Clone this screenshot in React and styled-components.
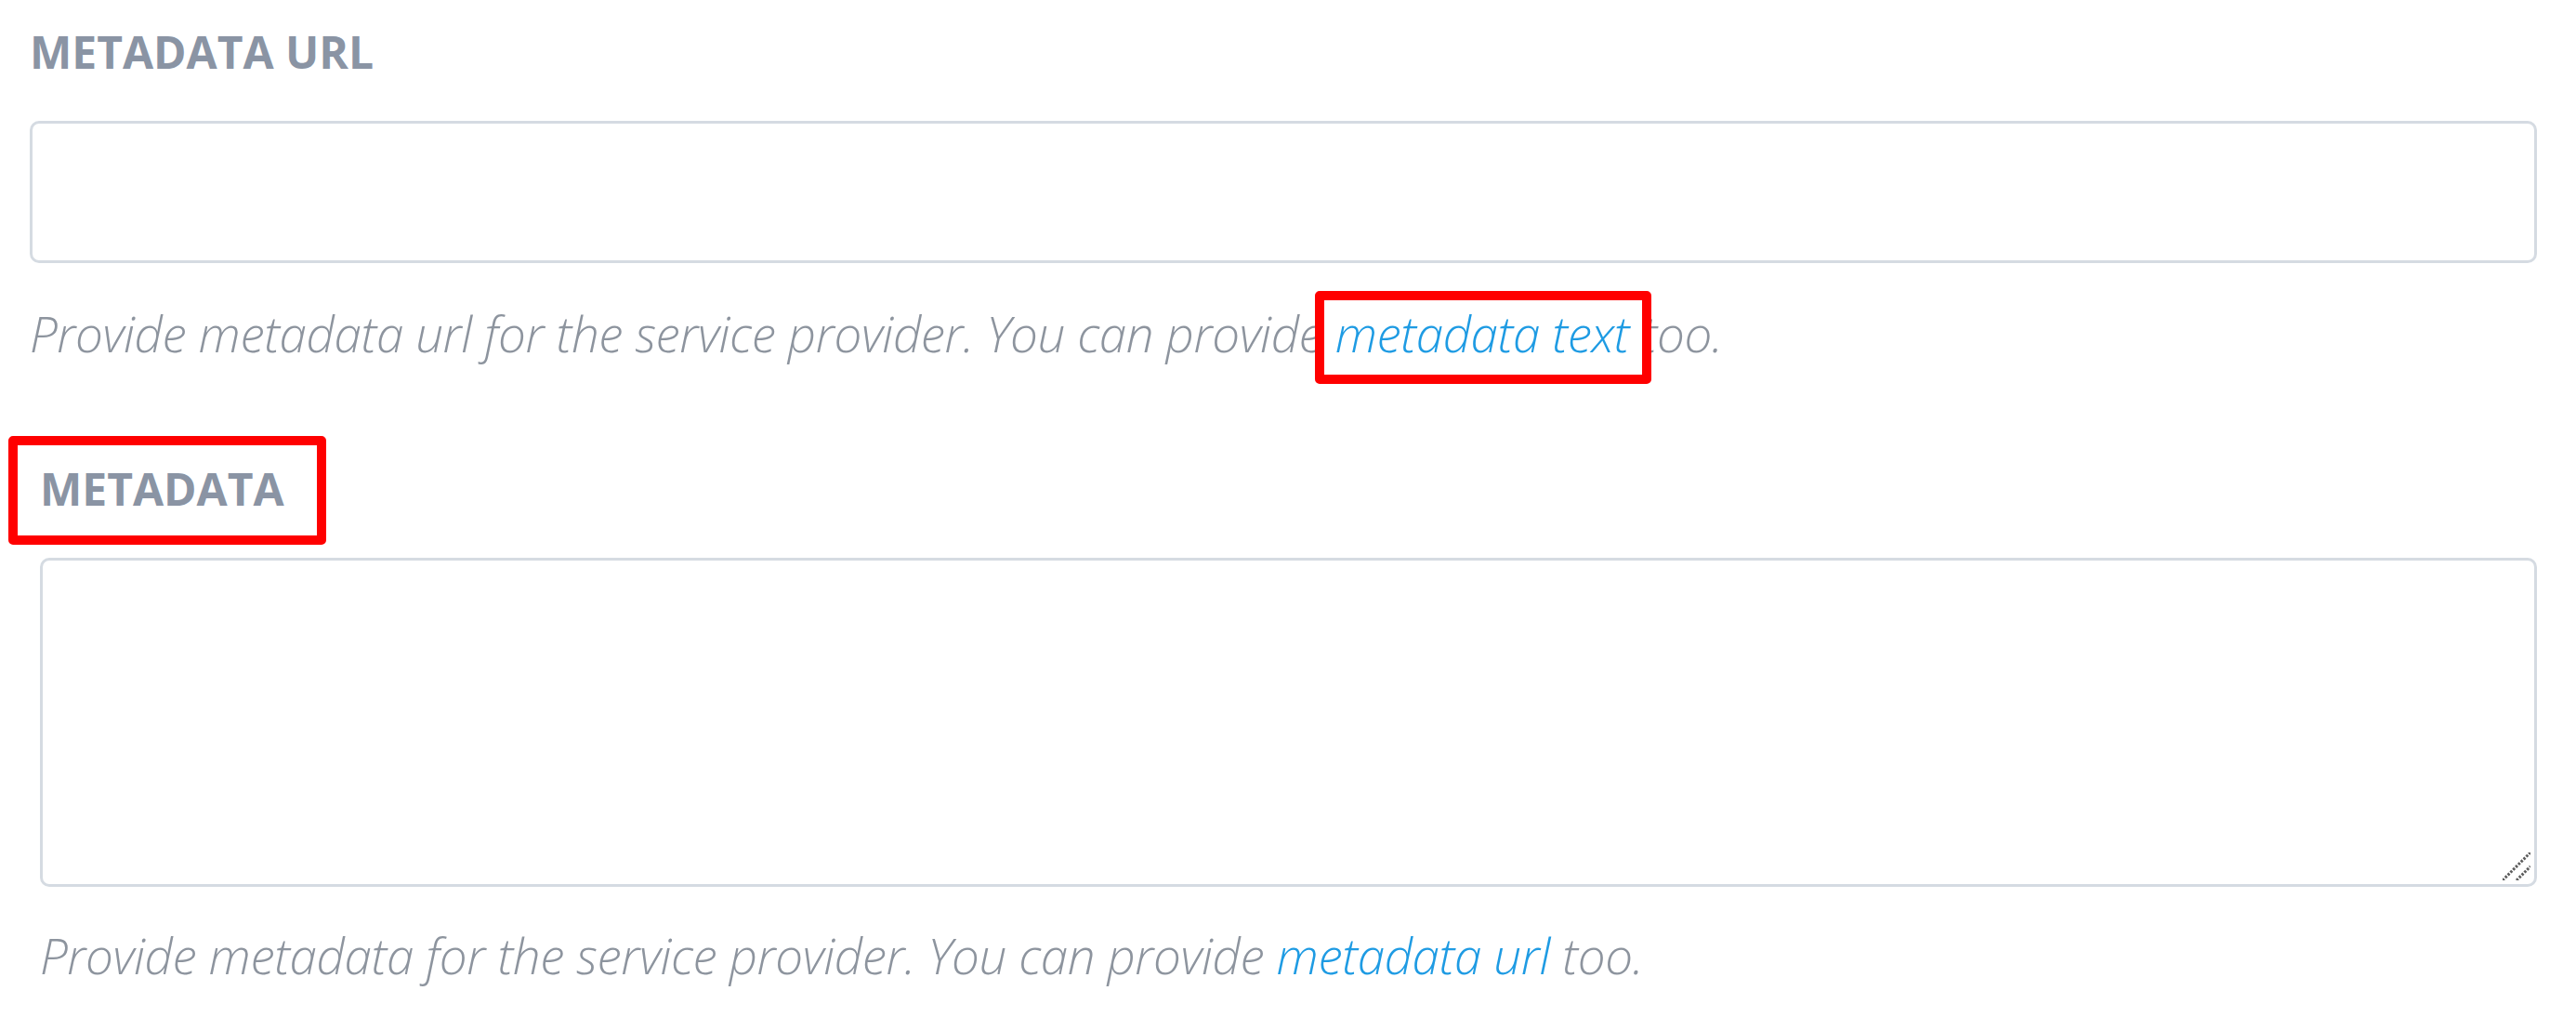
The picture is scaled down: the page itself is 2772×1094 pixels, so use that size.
import React from "react";
import styled, { createGlobalStyle, css } from "styled-components";

const GlobalStyle = createGlobalStyle`
  html, body {
    margin: 0;
    padding: 0;
    background: #ffffff;
  }
  body {
    font-family: "Open Sans", "Noto Sans", sans-serif;
  }
`;

const annotation = css`
  position: relative;
  &::after {
    content: "";
    position: absolute;
    border: 10px solid #ff0000;
    border-radius: 5px;
    pointer-events: none;
  }
`;

const Page = styled.div`
  width: 2772px;
  height: 1094px;
  box-sizing: border-box;
  padding-top: 24px;
  overflow: hidden;
`;

const Field = styled.div`
  display: flex;
  flex-direction: column;
  align-items: flex-start;
  padding: 0 42px 0 ${(p) => p.$indent}px;
  margin-top: ${(p) => p.$gap || 0}px;
`;

const Label = styled.span`
  display: inline-block;
  font-size: 48px;
  line-height: 64px;
  font-weight: 700;
  color: #8a94a4;
  text-transform: uppercase;
  ${(p) =>
    p.$marked &&
    css`
      ${annotation}
      &::after {
        left: -34px;
        top: -25px;
        right: -45px;
        bottom: -28px;
      }
    `}
`;

const Input = styled.input`
  display: block;
  box-sizing: border-box;
  width: 100%;
  height: 153px;
  margin-top: 42px;
  border: 3px solid #d5dbe2;
  border-radius: 10px;
  background: #ffffff;
  outline: none;
`;

const AreaWrap = styled.div`
  position: relative;
  width: 100%;
  margin-top: 42px;
`;

const TextArea = styled.textarea`
  display: block;
  box-sizing: border-box;
  width: 100%;
  height: 354px;
  border: 3px solid #d5dbe2;
  border-radius: 10px;
  background: #ffffff;
  outline: none;
  resize: none;
`;

const Grip = styled.svg`
  position: absolute;
  right: 7px;
  bottom: 7px;
  width: 30px;
  height: 30px;
`;

const Hint = styled.p`
  margin: ${(p) => p.$gap}px 0 0;
  font-size: 53px;
  line-height: 74px;
  letter-spacing: -0.42px;
  font-style: italic;
  font-weight: 300;
  color: #8d949e;
  white-space: nowrap;
`;

const HintLink = styled.a`
  color: #1e9be3;
  text-decoration: none;
  ${(p) =>
    p.$marked &&
    css`
      ${annotation}
      &::after {
        left: -22px;
        top: -9px;
        right: -24px;
        bottom: -18px;
      }
    `}
`;

const App = () => {
  return (
    <>
      <GlobalStyle />
      <Page>
        <Field $indent={32}>
          <Label>Metadata URL</Label>
          <Input type="text" />
          <Hint $gap={39}>
            Provide metadata url for the service provider. You can provide{" "}
            <HintLink href="#" $marked>
              metadata text
            </HintLink>{" "}
            too.
          </Hint>
        </Field>
        <Field $indent={43} $gap={98}>
          <Label $marked>Metadata</Label>
          <AreaWrap>
            <TextArea />
            <Grip viewBox="0 0 30 30">
              <line x1="0" y1="30" x2="30" y2="0" stroke="#5c5c5c" strokeWidth="3" strokeDasharray="2.5 1.5" />
              <line x1="15" y1="30" x2="30" y2="15" stroke="#5c5c5c" strokeWidth="3" strokeDasharray="2.5 1.5" />
            </Grip>
          </AreaWrap>
          <Hint $gap={37}>
            Provide metadata for the service provider. You can provide{" "}
            <HintLink href="#">metadata url</HintLink> too.
          </Hint>
        </Field>
      </Page>
    </>
  );
};

export default App;
